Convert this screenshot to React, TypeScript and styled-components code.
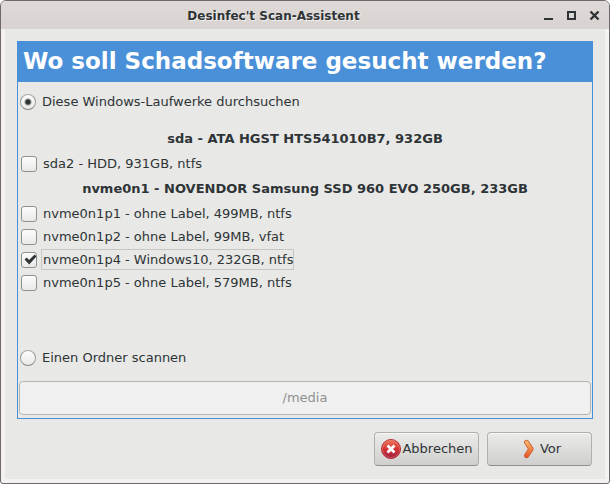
import React, { useState } from "react";
import styled, { createGlobalStyle } from "styled-components";

const GlobalStyle = createGlobalStyle`
  * { box-sizing: border-box; }
  body { margin: 0; background: #fff; }
  body, button, input { font-family: "DejaVu Sans", sans-serif; font-size: 13px; color: #2e3436; }
`;

const Window = styled.div`
  display: flex;
  flex-direction: column;
  min-height: 100vh;
  border: 1px solid #6f6967;
  border-radius: 6px 6px 3px 3px;
  background: #f4f2f0;
  overflow: hidden;
`;

const TitleBar = styled.header`
  display: flex;
  align-items: center;
  height: 28px;
  padding: 0 7px 0 6px;
  background: linear-gradient(#dfdad7, #d8d3d0);
`;

const WindowTitle = styled.span`
  flex: 1;
  padding-top: 1px;
  font-size: 12px;
  font-weight: bold;
  line-height: 16px;
  text-align: center;
  text-shadow: 1px 1px 0 #f2efed;
`;

const WindowControls = styled.div`
  display: flex;
  justify-content: flex-end;
  gap: 7px;
`;

const ControlButton = styled.button`
  display: flex;
  width: 16px;
  height: 16px;
  padding: 0;
  border: 0;
  background: none;
`;

const Content = styled.main`
  display: flex;
  flex: 1;
  flex-direction: column;
  margin: 0 4px 4px;
  padding: 12px 12px 13px;
  background: #e8e8e6;
`;

const Panel = styled.section`
  display: flex;
  flex: 1;
  flex-direction: column;
  border: 1px solid #4a90d9;
  padding-bottom: 3px;
`;

const Heading = styled.h1`
  margin: 0;
  padding: 4px 5px 6px;
  background: #4a90d9;
  color: #fff;
  font-size: 23px;
  line-height: 30px;
`;

const Row = styled.label`
  display: flex;
  align-items: center;
  gap: 4px;
  height: 23px;
  padding-left: 3px;
`;

const RadioRow = styled(Row)`
  padding-left: 2px;
`;

const ModeGroup = styled.div`
  padding: 8px 0 12px;
`;

const FolderMode = styled(ModeGroup)`
  margin-top: auto;
`;

const Toggle = styled.input`
  appearance: none;
  flex: none;
  width: 16px;
  height: 16px;
  margin: 0;
  border: 1px solid #8f918c;
  outline: none;
  background: linear-gradient(#fcfcfc, #e9e9e8);
`;

const Radio = styled(Toggle)`
  border-color: #a9aaa7 #999a96 #858783;
  border-radius: 50%;
  &:checked {
    background: radial-gradient(circle, #2e3436 0 2px, #2e343600 4px),
      linear-gradient(#fcfcfc, #e9e9e8);
  }
`;

const Checkbox = styled(Toggle)`
  border-radius: 3px;
`;

const CheckBoxCell = styled.span`
  display: grid;
  flex: none;
  > * { grid-area: 1 / 1; }
  > svg { pointer-events: none; }
`;

const RowText = styled.span<{ $focused?: boolean }>`
  padding: 1px 0 0 1px;
  border: 1px solid ${(p) => (p.$focused ? "#c6c6c3" : "transparent")};
  line-height: 18px;
  white-space: nowrap;
`;

const DiskTitle = styled.h2`
  margin: 0;
  height: 27px;
  font-size: 13px;
  line-height: 27px;
  text-align: center;
`;

const FolderButton = styled.button`
  height: 34px;
  margin: 0 1px;
  padding: 0 0 2px;
  border: 1px solid #b4b4b0;
  border-radius: 4px;
  background: #f0f0f0;
  &:disabled { color: #8e9090; }
`;

const Actions = styled.footer`
  display: grid;
  grid-template-columns: repeat(2, 105px);
  justify-content: end;
  gap: 8px;
  padding: 13px 1px 0;
`;

const ActionButton = styled.button`
  display: flex;
  align-items: center;
  justify-content: center;
  height: 34px;
  padding: 0;
  border: 1px solid #b0b0ac;
  border-bottom-color: #8f908c;
  border-radius: 4px;
  background: linear-gradient(#ebebea, #cfcfcd);
  box-shadow: inset 0 1px 0 #f7f7f6;
`;

const ActionText = styled.span`
  padding-bottom: 1px;
`;

const CheckMark = () => (
  <svg width="16" height="16" viewBox="0 0 16 16" aria-hidden="true">
    <path d="M3.6 7.4 5.8 5.6 8 8 13.6 2.6 15.4 4.4 8.2 12.6Z" fill="#2e3436" />
  </svg>
);

const CancelIcon = () => (
  <svg width="22" height="22" viewBox="0 0 22 22" aria-hidden="true">
    <defs>
      <linearGradient id="cancel-fill" x2="0" y2="1">
        <stop offset="0" stopColor="#ee795d" />
        <stop offset=".5" stopColor="#d73234" />
        <stop offset="1" stopColor="#992044" />
      </linearGradient>
    </defs>
    <circle cx="11" cy="11" r="9.5" fill="url(#cancel-fill)" stroke="#b52f38" />
    <circle cx="11" cy="11" r="8.5" fill="none" stroke="#f6a08b" strokeOpacity=".35" />
    <path d="m7.5 7.5 7 7m0-7-7 7" stroke="#fff" strokeWidth="2.8" />
  </svg>
);

const NextIcon = () => (
  <svg width="22" height="22" viewBox="0 0 22 22" aria-hidden="true">
    <defs>
      <linearGradient id="next-fill" gradientUnits="userSpaceOnUse" x1="0" y1="2" x2="0" y2="20">
        <stop offset="0" stopColor="#f8c07a" />
        <stop offset=".5" stopColor="#ee8643" />
        <stop offset="1" stopColor="#e4501f" />
      </linearGradient>
    </defs>
    <path d="M8.6 4.4 13 11l-4.4 6.6" fill="none" stroke="#cc6038" strokeWidth="5.2" strokeLinecap="round" strokeLinejoin="round" />
    <path d="M8.6 4.4 13 11l-4.4 6.6" fill="none" stroke="url(#next-fill)" strokeWidth="3.6" strokeLinecap="round" strokeLinejoin="round" />
  </svg>
);

const disks = [
  {
    title: "sda - ATA HGST HTS541010B7, 932GB",
    partitions: [{ id: "sda2", text: "sda2 - HDD, 931GB, ntfs" }],
  },
  {
    title: "nvme0n1 - NOVENDOR Samsung SSD 960 EVO 250GB, 233GB",
    partitions: [
      { id: "nvme0n1p1", text: "nvme0n1p1 - ohne Label, 499MB, ntfs" },
      { id: "nvme0n1p2", text: "nvme0n1p2 - ohne Label, 99MB, vfat" },
      { id: "nvme0n1p4", text: "nvme0n1p4 - Windows10, 232GB, ntfs" },
      { id: "nvme0n1p5", text: "nvme0n1p5 - ohne Label, 579MB, ntfs" },
    ],
  },
];

export default function App() {
  const [mode, setMode] = useState("drives");
  const [selected, setSelected] = useState<string[]>(["nvme0n1p4"]);
  const [focused, setFocused] = useState("nvme0n1p4");

  const toggle = (id: string) =>
    setSelected((ids) => (ids.includes(id) ? ids.filter((x) => x !== id) : [...ids, id]));

  return (
    <>
      <GlobalStyle />
      <Window>
        <TitleBar>
          <WindowTitle>Desinfec't Scan-Assistent</WindowTitle>
          <WindowControls>
            <ControlButton aria-label="Minimieren">
              <svg width="16" height="16"><path d="M4 12h9" stroke="#2e3436" strokeWidth="2" /></svg>
            </ControlButton>
            <ControlButton aria-label="Maximieren">
              <svg width="16" height="16"><path d="M5 5h7v7H5Z" fill="none" stroke="#2e3436" strokeWidth="2" /></svg>
            </ControlButton>
            <ControlButton aria-label="Schließen">
              <svg width="16" height="16"><path d="m4.5 4.5 8 8m0-8-8 8" stroke="#2e3436" strokeWidth="2.4" /></svg>
            </ControlButton>
          </WindowControls>
        </TitleBar>
        <Content>
          <Panel>
            <Heading>Wo soll Schadsoftware gesucht werden?</Heading>
            <ModeGroup>
              <RadioRow>
                <Radio type="radio" name="mode" checked={mode === "drives"} onChange={() => setMode("drives")} />
                <RowText>Diese Windows-Laufwerke durchsuchen</RowText>
              </RadioRow>
            </ModeGroup>
            {disks.map((disk) => (
              <div key={disk.title}>
                <DiskTitle>{disk.title}</DiskTitle>
                {disk.partitions.map(({ id, text }) => (
                  <Row key={id}>
                    <CheckBoxCell>
                      <Checkbox
                        type="checkbox"
                        checked={selected.includes(id)}
                        onChange={() => toggle(id)}
                        onFocus={() => setFocused(id)}
                      />
                      {selected.includes(id) && <CheckMark />}
                    </CheckBoxCell>
                    <RowText $focused={focused === id}>{text}</RowText>
                  </Row>
                ))}
              </div>
            ))}
            <FolderMode>
              <RadioRow>
                <Radio type="radio" name="mode" checked={mode === "folder"} onChange={() => setMode("folder")} />
                <RowText>Einen Ordner scannen</RowText>
              </RadioRow>
            </FolderMode>
            <FolderButton disabled={mode !== "folder"}>/media</FolderButton>
          </Panel>
          <Actions>
            <ActionButton><CancelIcon /><ActionText>Abbrechen</ActionText></ActionButton>
            <ActionButton><NextIcon /><ActionText>Vor</ActionText></ActionButton>
          </Actions>
        </Content>
      </Window>
    </>
  );
}
